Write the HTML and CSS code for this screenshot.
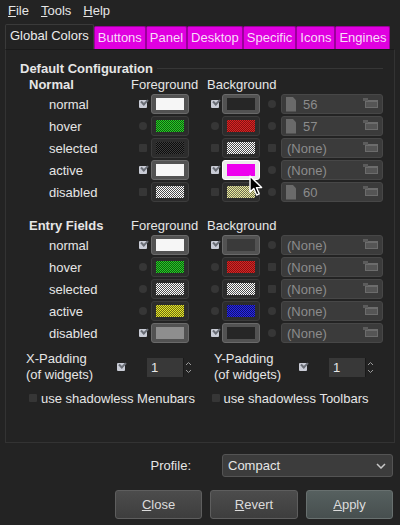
FILE: index.html
```html
<!DOCTYPE html>
<html lang="en">
  <head>
    <meta charset="utf-8" />
    <title>Theme Colors</title>
    <link rel="stylesheet" href="styles.css">
  </head>
  <body>
    <div class="menubar">
      <span><u>F</u>ile</span>
      <span><u>T</u>ools</span>
      <span><u>H</u>elp</span>
    </div>

    <div class="tabs">
      <div class="tab current">Global Colors</div>
      <div class="tab">Buttons</div>
      <div class="tab">Panel</div>
      <div class="tab">Desktop</div>
      <div class="tab">Specific</div>
      <div class="tab">Icons</div>
      <div class="tab">Engines</div>
    </div>

    <div class="panel">
      <div class="group-title">Default Configuration</div>

      <div class="section-head">
        <span class="sname">Normal</span>
        <span class="scol">Foreground</span>
        <span>Background</span>
      </div>
      <div class="row">
        <span class="lbl">normal</span>
        <span class="cell"><i class="cb on"></i></span>
        <span class="sw on"><i class="white"></i></span>
        <span class="cell c2"><i class="cb on"></i></span>
        <span class="sw on bgsw"><i class="dark"></i></span>
        <span class="cell c3"><i class="cb rd"></i></span>
        <span class="field"><i class="doc"></i><span class="ftext">56</span><span class="fbtn"></span></span>
      </div>
      <div class="row">
        <span class="lbl">hover</span>
        <span class="cell"><i class="cb rd"></i></span>
        <span class="sw"><i class="green"></i></span>
        <span class="cell c2"><i class="cb rd"></i></span>
        <span class="sw bgsw"><i class="red"></i></span>
        <span class="cell c3"><i class="cb rd"></i></span>
        <span class="field"><i class="doc"></i><span class="ftext">57</span><span class="fbtn"></span></span>
      </div>
      <div class="row">
        <span class="lbl">selected</span>
        <span class="cell"><i class="cb"></i></span>
        <span class="sw"><i class="black"></i></span>
        <span class="cell c2"><i class="cb"></i></span>
        <span class="sw bgsw"><i class="checker"></i></span>
        <span class="cell c3"><i class="cb"></i></span>
        <span class="field"><span class="ftext none">(None)</span><span class="fbtn"></span></span>
      </div>
      <div class="row">
        <span class="lbl">active</span>
        <span class="cell"><i class="cb on"></i></span>
        <span class="sw on"><i class="white"></i></span>
        <span class="cell c2"><i class="cb on"></i></span>
        <span class="sw hot bgsw">
          <i class="magenta"></i>
          <svg class="cursor" width="14" height="21" viewBox="0 0 14 21">
            <path d="M1 1 L1 17 L4.8 13.4 L7.6 20 L10.2 18.9 L7.5 12.6 L12.6 12.6 Z" fill="#000" stroke="#fff" stroke-width="1.4" stroke-linejoin="round"/>
          </svg>
        </span>
        <span class="cell c3"><i class="cb rd"></i></span>
        <span class="field"><span class="ftext none">(None)</span><span class="fbtn"></span></span>
      </div>
      <div class="row">
        <span class="lbl">disabled</span>
        <span class="cell"><i class="cb"></i></span>
        <span class="sw"><i class="checker"></i></span>
        <span class="cell c2"><i class="cb"></i></span>
        <span class="sw bgsw"><i class="paleyellow"></i></span>
        <span class="cell c3"><i class="cb rd"></i></span>
        <span class="field"><i class="doc"></i><span class="ftext">60</span><span class="fbtn"></span></span>
      </div>

      <div class="section-head gap">
        <span class="sname">Entry Fields</span>
        <span class="scol">Foreground</span>
        <span>Background</span>
      </div>
      <div class="row">
        <span class="lbl">normal</span>
        <span class="cell"><i class="cb on"></i></span>
        <span class="sw on"><i class="white"></i></span>
        <span class="cell c2"><i class="cb on"></i></span>
        <span class="sw on bgsw"><i class="mid"></i></span>
        <span class="cell c3"><i class="cb rd"></i></span>
        <span class="field"><span class="ftext none">(None)</span><span class="fbtn"></span></span>
      </div>
      <div class="row">
        <span class="lbl">hover</span>
        <span class="cell"><i class="cb rd"></i></span>
        <span class="sw"><i class="green"></i></span>
        <span class="cell c2"><i class="cb rd"></i></span>
        <span class="sw bgsw"><i class="red"></i></span>
        <span class="cell c3"><i class="cb"></i></span>
        <span class="field"><span class="ftext none">(None)</span><span class="fbtn"></span></span>
      </div>
      <div class="row">
        <span class="lbl">selected</span>
        <span class="cell"><i class="cb rd"></i></span>
        <span class="sw"><i class="checker"></i></span>
        <span class="cell c2"><i class="cb rd"></i></span>
        <span class="sw bgsw"><i class="checker"></i></span>
        <span class="cell c3"><i class="cb"></i></span>
        <span class="field"><span class="ftext none">(None)</span><span class="fbtn"></span></span>
      </div>
      <div class="row">
        <span class="lbl">active</span>
        <span class="cell"><i class="cb rd"></i></span>
        <span class="sw"><i class="yellow"></i></span>
        <span class="cell c2"><i class="cb rd"></i></span>
        <span class="sw bgsw"><i class="blue"></i></span>
        <span class="cell c3"><i class="cb rd"></i></span>
        <span class="field"><span class="ftext none">(None)</span><span class="fbtn"></span></span>
      </div>
      <div class="row">
        <span class="lbl">disabled</span>
        <span class="cell"><i class="cb on"></i></span>
        <span class="sw on"><i class="gray"></i></span>
        <span class="cell c2"><i class="cb on"></i></span>
        <span class="sw on bgsw"><i class="dark"></i></span>
        <span class="cell c3"><i class="cb rd"></i></span>
        <span class="field"><span class="ftext none">(None)</span><span class="fbtn"></span></span>
      </div>

      <div class="pad-row">
        <span class="plabel">X-Padding<br>(of widgets)</span>
        <i class="cb on"></i>
        <span class="spin">
          <span class="sval">1</span>
          <svg class="sarrows" width="9" height="19" viewBox="0 0 9 19"><path d="M2 7 L4.5 4.5 L7 7 M2 12 L4.5 14.5 L7 12" fill="none" stroke="#9a9a9a" stroke-width="1"/></svg>
        </span>
        <span class="plabel ylabel">Y-Padding<br>(of widgets)</span>
        <i class="cb on"></i>
        <span class="spin">
          <span class="sval">1</span>
          <svg class="sarrows" width="9" height="19" viewBox="0 0 9 19"><path d="M2 7 L4.5 4.5 L7 7 M2 12 L4.5 14.5 L7 12" fill="none" stroke="#9a9a9a" stroke-width="1"/></svg>
        </span>
      </div>

      <div class="opt-row">
        <span class="opt"><i class="cb"></i>use shadowless Menubars</span>
        <span class="opt"><i class="cb"></i>use shadowless Toolbars</span>
      </div>
    </div>

    <div class="profile">
      <span class="plbl">Profile:</span>
      <div class="combo">
        <span>Compact</span>
        <svg width="10" height="6" viewBox="0 0 10 6"><path d="M1 1 L5 5 L9 1" fill="none" stroke="#c8c8c8" stroke-width="1.5"/></svg>
      </div>
    </div>

    <div class="buttons">
      <button class="btn"><u>C</u>lose</button>
      <button class="btn wide"><u>R</u>evert</button>
      <button class="btn default"><u>A</u>pply</button>
    </div>
  </body>
</html>
```

FILE: styles.css
```css
html,
body {
  margin: 0px;
  padding: 0px;
}
body {
  width: 400px;
  height: 525px;
  overflow: hidden;
  background-color: #232323;
  color: #e6e6e6;
  font-family: "Liberation Sans", Arial, sans-serif;
  font-size: 13px;
}
i {
  display: block;
  font-style: normal;
}
.menubar {
  display: flex;
  align-items: center;
  gap: 12px;
  height: 20px;
  padding-left: 8px;
}
.tabs {
  display: flex;
  align-items: flex-end;
  margin-top: 5px;
  padding-left: 5px;
  height: 24px;
}
.tab {
  flex-shrink: 0;
  white-space: nowrap;
  height: 22px;
  line-height: 22px;
  padding: 0px 3px;
  background-color: #e000e0;
  color: #f8dcf8;
  border: 1px solid #9c009c;
  border-bottom: none;
  border-radius: 2px 2px 0px 0px;
}
.tab.current {
  height: 24px;
  line-height: 22px;
  padding: 0px 4px;
  background-color: #232323;
  color: #ececec;
  border-color: #3a3a3a;
}
.panel {
  height: 394px;
  margin: 0px 5px;
  padding: 11px 0px 0px 14px;
  box-sizing: border-box;
  border: 1px solid #333333;
  border-top-color: #1a1a1a;
}
.group-title {
  display: flex;
  align-items: center;
  gap: 4px;
  height: 15px;
  margin-right: 11px;
  font-weight: bold;
}
.group-title::after {
  content: "";
  flex: 1;
  border-top: 1px solid #363636;
}
.section-head {
  display: flex;
  align-items: center;
  height: 17px;
  margin-left: 9px;
}
.section-head.gap {
  margin-top: 14px;
}
.sname {
  width: 102px;
  font-weight: bold;
}
.scol {
  width: 76px;
}
.row {
  display: flex;
  align-items: center;
  height: 22px;
  margin-left: 9px;
}
.lbl {
  width: 108px;
  padding-left: 20px;
  box-sizing: border-box;
}
.cell {
  width: 12px;
  display: flex;
  justify-content: center;
}
.cell.c2 {
  margin-left: 20px;
}
.cell.c3 {
  margin-left: 6px;
}
.cb {
  position: relative;
  width: 8px;
  height: 8px;
  background-color: #363636;
  border-radius: 1px;
  flex-shrink: 0;
}
.cb.rd {
  border-radius: 50%;
}
.cb.on {
  background-color: #c9ccd6;
}
.cb.on::after {
  content: "";
  position: absolute;
  left: 2px;
  top: -1px;
  width: 5px;
  height: 3px;
  border-left: 2px solid #6a6e76;
  border-bottom: 2px solid #6a6e76;
  transform: rotate(-45deg);
}
.sw {
  position: relative;
  width: 38px;
  height: 20px;
  margin-left: 2px;
  padding: 3px 4px;
  box-sizing: border-box;
  background-color: #2c2c2c;
  border: 1px solid #3c3c3c;
  border-radius: 3px;
}
.sw.bgsw {
  margin-left: 1px;
}
.sw.on {
  background-color: #525252;
  border-color: #6a6a6a;
}
.sw.hot {
  background-color: #ececec;
  border-color: #ffffff;
}
.sw i {
  height: 100%;
}
.cursor {
  position: absolute;
  left: 26px;
  top: 14px;
  z-index: 2;
}
.white {
  background-color: #f6f6f6;
}
.dark {
  background-color: #262626;
}
.mid {
  background-color: #3a3a3a;
}
.gray {
  background-color: #8e8e8e;
}
.magenta {
  background-color: #ee00ee;
}
.green {
  background: repeating-conic-gradient(#27d027 0 25%, #0e5a0e 0 50%) 0 0 / 2px 2px;
}
.red {
  background: repeating-conic-gradient(#dc2222 0 25%, #801414 0 50%) 0 0 / 2px 2px;
}
.black {
  background: repeating-conic-gradient(#0c0c0c 0 25%, #3c3c3c 0 50%) 0 0 / 2px 2px;
}
.checker {
  background: repeating-conic-gradient(#ffffff 0 25%, #4c4c4c 0 50%) 0 0 / 2px 2px;
}
.paleyellow {
  background: repeating-conic-gradient(#ecec9c 0 25%, #6c6c54 0 50%) 0 0 / 2px 2px;
}
.yellow {
  background: repeating-conic-gradient(#e8e82a 0 25%, #6a6a14 0 50%) 0 0 / 2px 2px;
}
.blue {
  background: repeating-conic-gradient(#2828e8 0 25%, #10106e 0 50%) 0 0 / 2px 2px;
}
.field {
  display: flex;
  align-items: center;
  width: 102px;
  height: 20px;
  margin-left: 3px;
  padding-left: 4px;
  box-sizing: border-box;
  background-color: #3b3b3b;
  border: 1px solid #474747;
  border-radius: 3px;
  color: #8c8c8c;
  font-size: 13px;
}
.doc {
  width: 10px;
  height: 15px;
  background-color: #6a6a6a;
  clip-path: polygon(0 0, 65% 0, 100% 25%, 100% 100%, 0 100%);
}
.ftext {
  margin-left: 7px;
}
.ftext.none {
  margin-left: 1px;
}
.fbtn {
  position: relative;
  width: 13px;
  height: 8px;
  margin-left: auto;
  margin-right: 4px;
  border: 1px solid #6c6c6c;
  border-top-width: 2px;
  box-sizing: border-box;
  background-color: #555555;
}
.fbtn::before {
  content: "";
  position: absolute;
  left: -3px;
  top: -4px;
  width: 5px;
  height: 3px;
  background-color: #5c5c5c;
}
.pad-row {
  display: flex;
  align-items: center;
  height: 32px;
  margin-top: 7px;
  margin-left: 6px;
}
.plabel {
  width: 91px;
  line-height: 16px;
}
.ylabel {
  width: 85px;
  margin-left: 21px;
}
.spin {
  display: flex;
  margin-left: 22px;
}
.sval {
  width: 36px;
  height: 19px;
  line-height: 19px;
  padding-left: 4px;
  box-sizing: border-box;
  background-color: #383838;
  color: #e6e6e6;
}
.sarrows {
  display: block;
  border-left: 1px solid #1a1a1a;
}
.opt-row {
  display: flex;
  align-items: center;
  height: 20px;
  margin-top: 5px;
  margin-left: 9px;
}
.opt {
  display: flex;
  align-items: center;
  gap: 4px;
  width: 187px;
}
.profile {
  display: flex;
  align-items: center;
  justify-content: flex-end;
  margin: 11px 7px 0px 0px;
}
.plbl {
  margin-right: 31px;
}
.combo {
  display: flex;
  align-items: center;
  justify-content: space-between;
  width: 171px;
  height: 23px;
  padding: 0px 6px 0px 5px;
  box-sizing: border-box;
  background-color: #3c3c3c;
  border: 1px solid #545454;
  border-radius: 3px;
}
.buttons {
  display: flex;
  justify-content: flex-end;
  gap: 8px;
  margin: 13px 7px 0px 0px;
}
.btn {
  width: 87px;
  height: 29px;
  padding: 0px;
  font-family: "Liberation Sans", Arial, sans-serif;
  font-size: 13px;
  color: #dcdcdc;
  background: linear-gradient(#4c4c4c, #3e3e3e);
  border: 1px solid #5e5e5e;
  border-radius: 3px;
}
.btn.wide {
  width: 88px;
}
.btn.default {
  background: linear-gradient(#56605f, #474f4f);
  border-color: #68706f;
}
```
